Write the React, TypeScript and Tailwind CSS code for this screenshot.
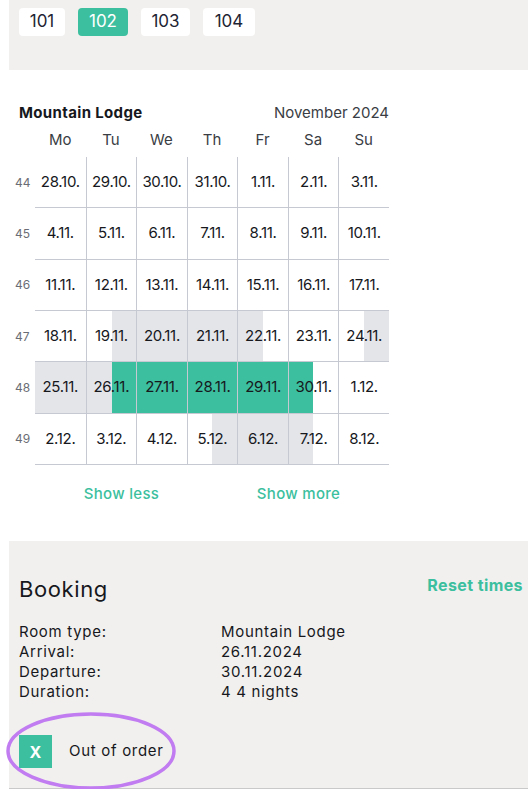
import React from 'react';

type Shade = 'none' | 'gray' | 'grayR' | 'grayL' | 'green' | 'grayGreen' | 'greenL';

const shadeClass: Record<Shade, string> = {
  none: '',
  gray: 'bg-[#e4e5e9]',
  grayR: 'bg-[linear-gradient(to_right,transparent_50%,#e4e5e9_50%)]',
  grayL: 'bg-[linear-gradient(to_right,#e4e5e9_50%,transparent_50%)]',
  green: 'bg-[#3cbf9e]',
  grayGreen: 'bg-[linear-gradient(to_right,#e4e5e9_50%,#3cbf9e_50%)]',
  greenL: 'bg-[linear-gradient(to_right,#3cbf9e_50%,transparent_50%)]',
};

interface Week {
  no: number;
  days: [string, Shade][];
}

const weeks: Week[] = [
  { no: 44, days: [['28.10.', 'none'], ['29.10.', 'none'], ['30.10.', 'none'], ['31.10.', 'none'], ['1.11.', 'none'], ['2.11.', 'none'], ['3.11.', 'none']] },
  { no: 45, days: [['4.11.', 'none'], ['5.11.', 'none'], ['6.11.', 'none'], ['7.11.', 'none'], ['8.11.', 'none'], ['9.11.', 'none'], ['10.11.', 'none']] },
  { no: 46, days: [['11.11.', 'none'], ['12.11.', 'none'], ['13.11.', 'none'], ['14.11.', 'none'], ['15.11.', 'none'], ['16.11.', 'none'], ['17.11.', 'none']] },
  { no: 47, days: [['18.11.', 'none'], ['19.11.', 'grayR'], ['20.11.', 'gray'], ['21.11.', 'gray'], ['22.11.', 'grayL'], ['23.11.', 'none'], ['24.11.', 'grayR']] },
  { no: 48, days: [['25.11.', 'gray'], ['26.11.', 'grayGreen'], ['27.11.', 'green'], ['28.11.', 'green'], ['29.11.', 'green'], ['30.11.', 'greenL'], ['1.12.', 'none']] },
  { no: 49, days: [['2.12.', 'none'], ['3.12.', 'none'], ['4.12.', 'none'], ['5.12.', 'grayR'], ['6.12.', 'gray'], ['7.12.', 'grayL'], ['8.12.', 'none']] },
];

const rooms = [
  { label: '101', w: 'w-[46px]', active: false },
  { label: '102', w: 'w-[50px]', active: true },
  { label: '103', w: 'w-[49px]', active: false },
  { label: '104', w: 'w-[52px]', active: false },
];

const details = [
  ['Room type:', 'Mountain Lodge'],
  ['Arrival:', '26.11.2024'],
  ['Departure:', '30.11.2024'],
  ['Duration:', '4 4 nights'],
];

export default function App() {
  return (
    <div className="w-[528px] h-[789px] overflow-hidden bg-white text-[#16181d] font-['Inter',sans-serif] flex flex-col">
      {/* room selector */}
      <div className="ml-[9px] h-[70px] shrink-0 bg-[#f2f0ee] flex gap-[13px] pl-[10px] pt-[8px]">
        {rooms.map((r) => (
          <button
            key={r.label}
            className={`${r.w} h-[28px] rounded-[4px] text-[17px] flex items-center justify-center ${
              r.active ? 'bg-[#3cbf9e] text-white' : 'bg-white text-[#1e2433]'
            }`}
          >
            {r.label}
          </button>
        ))}
      </div>

      {/* calendar */}
      <div className="pl-[10px] pt-[33px] w-[389px] shrink-0">
        <div className="flex items-center justify-between pl-[9px] h-[20px]">
          <span className="font-bold text-[15px] tracking-[0.35px]">Mountain Lodge</span>
          <span className="text-[15px] text-[#3a3d44]">November 2024</span>
        </div>
        <div className="flex h-[34px] items-center">
          <div className="w-[25px]" />
          <div className="grid grid-cols-7 w-[354px] text-[15px] text-[#3a3d44]">
            {['Mo', 'Tu', 'We', 'Th', 'Fr', 'Sa', 'Su'].map((d) => (
              <div key={d} className="text-center">{d}</div>
            ))}
          </div>
        </div>
        {weeks.map((w) => (
          <div key={w.no} className="flex h-[51.35px]">
            <div className="w-[25px] flex items-center text-[12px] text-[#6b6d75] pl-[5px]">{w.no}</div>
            <div className="grid grid-cols-7 w-[354px] border-b border-[#c6c8d2]">
              {w.days.map(([d, s], i) => (
                <div
                  key={d}
                  className={`flex items-center justify-center text-[15px] tracking-[-0.3px] ${shadeClass[s]} ${
                    i > 0 ? 'border-l border-[#c6c8d2]' : ''
                  }`}
                >
                  {d}
                </div>
              ))}
            </div>
          </div>
        ))}
        <div className="flex h-[58px] items-center pl-[25px]">
          <div className="grid grid-cols-2 w-[354px] text-[15px] font-medium tracking-[0.3px] text-[#3cbf9e]">
            <span className="text-center pr-[4px]">Show less</span>
            <span className="text-center pr-[4px]">Show more</span>
          </div>
        </div>
      </div>

      {/* booking */}
      <div className="ml-[9px] mt-[18px] flex-1 bg-[#f2f0ee] pl-[10px] pr-[5px] pt-[32px] relative border-b border-[#c9c9c9]">
        <div className="flex justify-between items-start">
          <h2 className="text-[22px] leading-[30px] mt-[1px] tracking-[0.6px]">Booking</h2>
          <span className="text-[16px] font-bold text-[#3cbf9e] leading-[24px] tracking-[0.4px]">Reset times</span>
        </div>
        <div className="mt-[18px] text-[15px] leading-[20px] tracking-[0.7px]">
          {details.map(([k, v]) => (
            <div key={k} className="flex">
              <span className="w-[202px]">{k}</span>
              <span>{v}</span>
            </div>
          ))}
        </div>
        <div className="mt-[33px] flex items-center gap-[17px]">
          <div className="w-[33px] h-[33px] bg-[#3cbf9e] flex items-center justify-center text-white font-bold text-[16px]">
            X
          </div>
          <span className="text-[15px] tracking-[0.7px]">Out of order</span>
        </div>
        <svg className="absolute left-[-3px] top-[170px]" width="172" height="80" viewBox="0 0 172 80">
          <ellipse cx="85" cy="40" rx="83" ry="37" fill="none" stroke="#c07cf0" strokeWidth="3.5" />
        </svg>
      </div>
    </div>
  );
}
